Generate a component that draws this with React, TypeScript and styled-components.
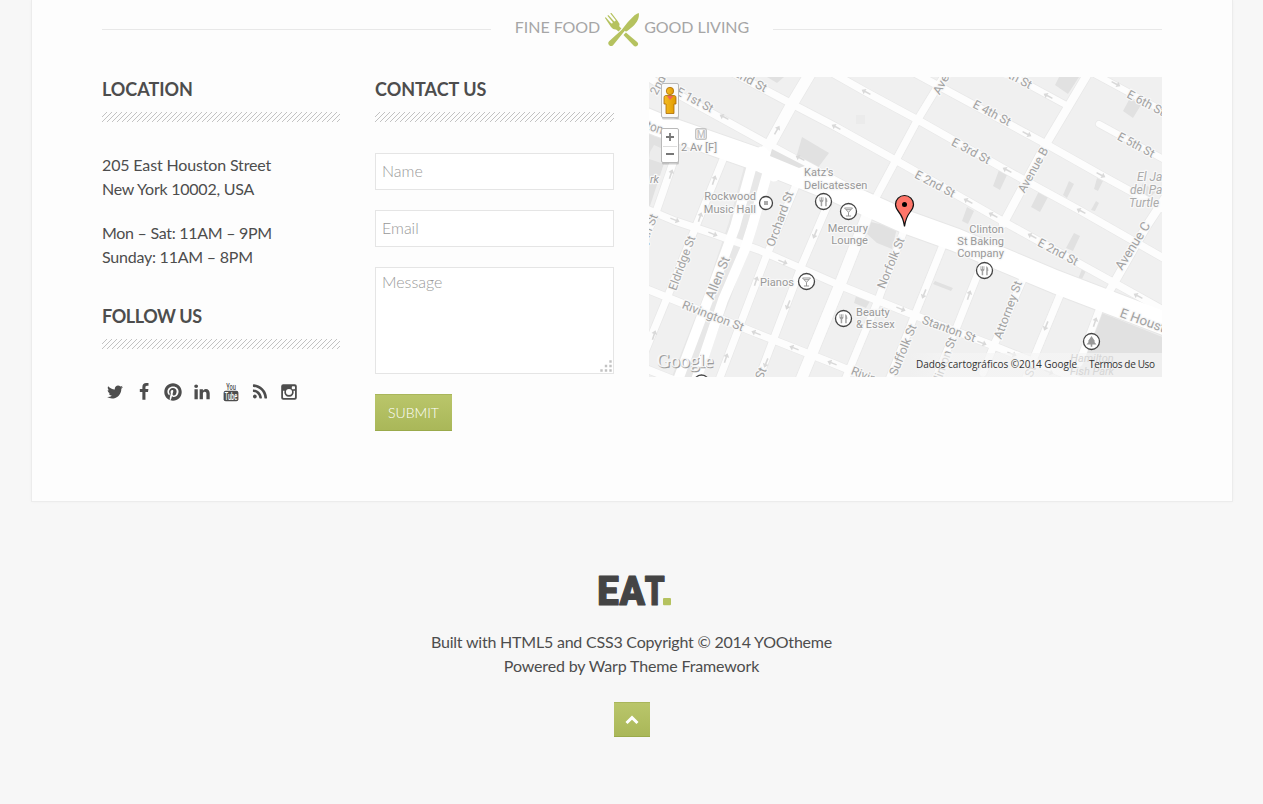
import React from "react";
import styled, { createGlobalStyle } from "styled-components";
import { FaPinterest } from "react-icons/fa";

const GlobalStyle = createGlobalStyle`
  *, *::before, *::after { box-sizing: border-box; }
  body {
    margin: 0;
    background: #f7f7f7;
    color: #4d4d4d;
    font: 400 16px/24px Lato, "Liberation Sans", sans-serif;
  }
`;

const hatch = `url("data:image/svg+xml,${encodeURIComponent(
  '<svg xmlns="http://www.w3.org/2000/svg" width="5" height="5" fill="#c2c2c2" shape-rendering="crispEdges"><rect x="0" y="4" width="1" height="1"/><rect x="1" y="3" width="1" height="1"/><rect x="2" y="2" width="1" height="1"/><rect x="3" y="1" width="1" height="1"/><rect x="4" y="0" width="1" height="1"/></svg>'
)}")`;

const Page = styled.div`
  height: 804px;
  overflow: hidden;
`;
const Card = styled.main`
  width: 1202px;
  height: 502px;
  margin: 0 auto 0 31px;
  padding: 0 70px;
  background: #fdfdfd;
  border: 1px solid #ececec;
  border-top: 0;
  box-shadow: 0 0 3px rgba(0, 0, 0, 0.03);
`;
const Tagline = styled.div`
  height: 77px;
  padding-top: 11px;
  display: flex;
  align-items: flex-start;
  color: #a6a6a6;
`;
const Rule = styled.span`
  flex: 1;
  height: 1px;
  margin-top: 18px;
  background: #e8e8e8;
`;
const TaglineText = styled.div`
  width: 282px;
  display: flex;
  justify-content: center;
  gap: 4px;
  line-height: 32px;
  letter-spacing: -0.05px;
  white-space: nowrap;
  svg { margin-top: 1px; }
`;
const Columns = styled.div`
  display: grid;
  grid-template-columns: 238px 239px 513px;
  gap: 35px;
`;
const Column = styled.section`
  display: flex;
  flex-direction: column;
`;
const Heading = styled.h3<{ $tracking?: number }>`
  margin: 0 0 31px;
  font-size: 18px;
  line-height: 24px;
  font-weight: 700;
  letter-spacing: ${(p) => p.$tracking ?? 0}px;
  &::after {
    content: "";
    display: block;
    height: 10px;
    margin-top: 11px;
    background: ${hatch} 0 0 / 5px 5px;
  }
`;
const Paragraph = styled.p<{ $gap: number }>`
  margin: 0 0 ${(p) => p.$gap}px;
`;
const Line = styled.span<{ $tracking: number }>`
  display: block;
  white-space: nowrap;
  letter-spacing: ${(p) => p.$tracking}px;
`;
const Socials = styled.nav`
  display: flex;
  gap: 11.100px;
  padding: 3px 0 0 3.500px;
  svg { display: block; width: 18px; height: 18px; fill: currentColor; overflow: visible; }
`;
const Form = styled.form`
  display: flex;
  flex-direction: column;
  align-items: stretch;
  gap: 20px;
`;
const fieldFont = `
  font: 300 16px/24px Lato, sans-serif;
  color: #4d4d4d;
  background: #fff;
  border: 1px solid #e5e5e5;
  border-radius: 0;
  width: 100%;
  outline: 0;
  &::placeholder { color: #999; opacity: 1; }
`;
const Field = styled.input`
  ${fieldFont}
  height: 37px;
  padding: 0 6px 2px;
`;
const MessageBox = styled.div`
  position: relative;
  height: 107px;
`;
const Message = styled.textarea`
  ${fieldFont}
  display: block;
  height: 107px;
  padding: 2px 6px;
  resize: none;
`;
const Grip = styled.svg`
  position: absolute;
  right: 1px;
  bottom: 2px;
`;
const greenFace = `
  background: linear-gradient(#bac66b, #a9b758);
  border: 0;
  box-shadow: inset 0 1px #a9b65b, inset 0 -1px #9aaa4b;
  color: #fff;
`;
const Submit = styled.button`
  ${greenFace}
  align-self: flex-start;
  width: 77px;
  height: 37px;
  padding: 0;
  font: 300 14px/37px Lato, sans-serif;
`;
const MapSvg = styled.svg`
  display: block;
  width: 513px;
  height: 300px;
  overflow: hidden;
  font-family: Roboto, sans-serif;
`;
const Footer = styled.footer`
  padding-top: 72px;
  display: flex;
  flex-direction: column;
  align-items: center;
  text-align: center;
`;
const Logo = styled.svg`
  overflow: visible;
`;
const Credits = styled.p`
  margin: 23px 0 24px;
`;
const ToTop = styled.button`
  ${greenFace}
  width: 36px;
  height: 35px;
  padding: 0;
  display: grid;
  place-items: center;
`;

const glyphs = {
  twitter:
    "M1684 408q-67 98-162 167 1 14 1 42 0 130-38 259.5t-115.5 248.5-184.5 210.5-258 146-323 54.5q-271 0-496-145 35 4 78 4 225 0 401-138-105-2-188-64.5t-114-159.5q33 5 61 5 43 0 85-11-112-23-185.5-111.5t-73.5-205.5v-4q68 38 146 41-66-44-105-115t-39-154q0-88 44-163 121 149 294.5 238.5t371.5 99.5q-8-38-8-74 0-134 94.5-228.5t228.5-94.5q140 0 236 102 109-21 205-78-37 115-142 178 93-10 186-50z",
  facebook:
    "M1343 12v264h-157q-86 0-116 36t-30 108v189h293l-39 296h-254v759h-306v-759h-255v-296h255v-218q0-186 104-288.5t277-102.5q147 0 228 12z",
  linkedin:
    "M477 625v991h-330v-991h330zm21-306q1 73-50.5 122t-135.5 49h-2q-82 0-132-49t-50-122q0-74 51.5-122.5t134.5-48.5 133 48.5 51 122.5zm1166 729v568h-329v-530q0-105-40.5-164.5t-126.5-59.5q-63 0-105.5 34.5t-63.5 85.5q-11 30-11 81v553h-329q2-399 2-647t-1-296l-1-48h329v144h-2q20-32 41-56t56.5-52 87-43.5 114.5-15.5q171 0 275 113.5t104 332.5z",
  rss: "M576 1344q0 80-56 136t-136 56-136-56-56-136 56-136 136-56 136 56 56 136zm512 123q2 28-17 48-18 21-47 21h-135q-25 0-43-16.5t-20-41.5q-22-229-184.5-391.5t-391.5-184.5q-25-2-41.5-20t-16.5-43v-135q0-29 21-47 17-17 43-17h5q160 13 306 80.5t259 181.5q114 113 181.5 259t80.5 306zm512 2q2 27-18 47-18 20-46 20h-143q-26 0-44.5-17.5t-19.5-42.5q-12-215-101-408.5t-231.5-336-336-231.5-408.5-102q-25-1-42.5-19.5t-17.5-43.5v-143q0-28 20-46 18-18 44-18h3q262 13 501.5 120t425.5 294q187 186 294 425.5t120 501.5z",
};
const Glyph = ({ d }: { d: string }) => (
  <svg viewBox="0 0 1792 1792"><path d={d} /></svg>
);
const YouTube = () => (
  <svg viewBox="0 0 18 18">
    <text x="4.200" y="6.500" fontSize="9.500" fontWeight="500" fontFamily="Roboto" textLength="9.600" lengthAdjust="spacingAndGlyphs">You</text>
    <rect x="1.600" y="7.700" width="14.800" height="10.600" rx="2" />
    <text x="2.800" y="16.700" fontSize="10" fontWeight="500" fontFamily="Roboto" fill="#fdfdfd" textLength="12.400" lengthAdjust="spacingAndGlyphs">Tube</text>
  </svg>
);
const Instagram = () => (
  <svg viewBox="0 0 18 18">
    <path fillRule="evenodd" d="M3.200 1.300h11.600a2 2 0 0 1 2 2v11.500a2 2 0 0 1-2 2H3.200a2 2 0 0 1-2-2V3.300a2 2 0 0 1 2-2zM3 7.800v6.500q0 .7.700.7h10.600q.7 0 .7-.7V7.800h-1.500a4.700 4.700 0 1 1-9 0zM12.500 3.200a.7.7 0 0 0-.7.7v1.700q0 .7.7.7h1.800q.7 0 .7-.7V3.900a.7.7 0 0 0-.7-.7zM9 6a3.050 3.050 0 1 0 0 6.100A3.050 3.050 0 0 0 9 6z" />
  </svg>
);
const Cutlery = () => (
  <svg width="36" height="36" viewBox="0.700 0 36 36" fill="#b5c25f">
    <path d="M35.500 1c.8 4.500-1.600 9.500-6 13.500l-5.200 4.300q-1.700 1.200-2.800 0L9.800 33.200q-2 1.800-3.900 0t-.1-3.900L18.500 17.700Q24 10 31.200 3.300 34 1.400 35.500 1z" />
    <path d="M22.600 20.600 33.800 30q2 1.900.2 3.700-1.900 1.700-3.800-.2l-10-10.600z" />
    <path d="m1.700 5.900 6 9q2.200 2.800 5 2.500l2.600 2.200 2.800-3-2.200-2.300q1-2.600-1.500-5.200L8.200 1.100q-.9-.4-1.200.5L12.200 8q.4 1-.4 1.300-.7.400-1.300-.2L5.300 3.200q-1-.3-1.200.6L9.300 10q.4 1-.4 1.400-.8.300-1.400-.3L2.700 5.400q-.8-.3-1 .5z" />
  </svg>
);

type Street = [string, number];
const streets: Street[] = [
  ["M-6 -3 10 7 117 66 228 126", 8],
  ["M65 -14 143 27 187 50 257 89 357 146 462 204 516 234", 8],
  ["M155 -20 217 15 269 43 357 93 432 134 516 182", 8],
  ["M262 -6 397 67 452 98 516 133", 8],
  ["M345 -11 417 28", 7],
  ["M450 47 516 83", 7],
  ["M440 -6 516 35", 7],
  ["M165 -10 143 27 115 78", 12],
  ["M300 -9 269 42 225 124", 8],
  ["M441 -7 397 67 354 147", 9],
  ["M520 115 497 150 457 220", 9],
  ["M26 80 6 138 -6 166", 8],
  ["M75 80 45 154 18 221 -12 294", 8],
  ["M147 108 117 180 70 303", 8],
  ["M179 127 152 190 109 303", 8],
  ["M220 134 190 210 152 303", 12],
  ["M258 145 228 226 196 303", 8],
  ["M294 168 267 235 240 303", 8],
  ["M334 184 305 257 286 303", 8],
  ["M374 202 345 268 334 296", 8],
  ["M411 218 382 288 376 303", 8],
  ["M451 231 430 286", 8],
  ["M-5 131 26 144 65 157 110 173 190 208 257 235 340 267 430 303", 8],
  ["M-5 211 107 256 145 271 183 286 229 305", 8],
  ["M-5 291 25 303", 8],
];
const blocks = [
  "M0 55 22 65 0 132z",
  "M153 60 180 76 168 92 147 81z",
  "M118 0h17l-7 6z",
  "M410 0h20l-11 17-13-9z",
  "M481 21 492 28 484 41 474 34z",
  "M350 93 358 98 351 113 344 109z",
  "M390 114 399 120 391 135 382 130z",
  "M420 104 425 107 418 121 414 118z",
  "M448 101 454 104 449 114 445 112z",
  "M447 124 450 126 446 134 442 133z",
  "M318 130 325 134 319 147 313 144z",
  "M425 156 431 159 424 174 417 171z",
  "M433 192 437 194 432 204 429 202z",
  "M222 145 248 151 243 172 228 166 218 157z",
  "M207 219 221 224 217 231 205 226z",
  "M286 204 304 211 302 214 284 207z",
  "M453 236 516 261V303H426z",
  "M494 106l13 9-9 7-7-9z",
];
type Arrow = [number, number, number];
const arrows: Arrow[] = [
  [75, 40, 208], [128, 53, -60], [187, 50, 208], [217, 15, 208], [151, 81, 208],
  [22, 97, -72], [65, 103, -72], [51, 140, -72], [26, 143, 22], [64, 157, 22],
  [134, 185, 22], [166, 157, 112], [107, 204, -72], [139, 228, 112], [117, 286, 112],
  [107, 256, 202], [145, 271, 202], [183, 286, 202], [77, 281, -72], [5, 258, -72],
  [252, 232, 22], [399, 19, 208], [467, 7, 28], [378, 57, 28], [358, 93, 208], [452, 98, 28],
  [319, 124, 208], [344, 138, 208], [432, 134, 208], [383, 159, 208],
  [275, 217, 112], [320, 218, -72], [397, 249, 112], [446, 245, -72], [333, 266, 22],
  [363, 277, 22], [489, 219, 208], [400, 295, 22],
];
// text, centre x, centre y, rotation, rendered length, font size
type Label = [string, number, number, number, number, number?];
const labels: Label[] = [
  ["2nd", 9, 8, -62, 20], ["E 1st St", 46, 23, 28, 40], ["E 2nd St", 97, 1, 28, 46],
  ["ouston", -3, 48, 18, 35, 13],
  ["Avenue A", 300, -7, -61, 54], ["E 4th St", 343, 36, 28, 41], ["E 5th St", 364, -1, 28, 41],
  ["E 3rd St", 322, 74, 28, 42], ["E 2nd St", 286, 107, 28, 44], ["Avenue B", 384, 93, -61, 50],
  ["E 6th St", 497, 26, 28, 41], ["E 5th St", 487, 68, 28, 40],
  ["E 2nd St", 409, 175, 28, 44], ["Avenue C", 484, 169, -58, 54, 13],
  ["Forsyth St", -5, 163, -68, 55], ["Eldridge St", 33, 186, -70, 57], ["Allen St", 69, 201, -68, 45, 13],
  ["Orchard St", 131, 142, -70, 58], ["Norfolk St", 242, 186, -68, 54], ["Suffolk St", 254, 273, -68, 54],
  ["Rivington St", 64, 239, 21, 65], ["Rivington St", 233, 305, 21, 65],
  ["Stanton St", 300, 252, 20, 56], ["Attorney St", 359, 233, -70, 61],
  ["Clinton St", 295, 285, -70, 52], ["Ludlow St", 104, 316, -68, 54],
  ["E Houston St", 508, 249, 20, 78, 13], ["Ridge St", 375, 310, -68, 45],
];
// anchor, x, first baseline, lines, line step
type Poi = ["start" | "middle" | "end", number, number, string[], number, boolean?];
const pois: Poi[] = [
  ["start", 32, 74, ["2 Av [F]"], 13],
  ["start", 155, 99, ["Katz's", "Delicatessen"], 13],
  ["end", 107, 123, ["Rockwood", "Music Hall"], 13],
  ["end", 219, 155, ["Mercury", "Lounge"], 12],
  ["end", 145, 209, ["Pianos"], 12],
  ["start", 207, 239, ["Beauty", "& Essex"], 12],
  ["end", 355, 156, ["Clinton", "St Baking", "Company"], 12],
  ["end", 10, 106, ["rk"], 12, true],
];
const Pin = ({ x, y, kind, r = 8 }: { x: number; y: number; kind: string; r?: number }) => (
  <g transform={`translate(${x} ${y})`}>
    <circle r={r} fill="#fff" stroke="#444" strokeWidth="1.300" />
    {kind === "fork" && (
      <g fill="#a3a3a3">
        <path d="M-4-4.300h.9v2.800h.6v-2.800h.9v2.800h.6v-2.800h.9v3.600q0 1-1.200 1.400v4h-1.500v-4Q-4 .3-4-.7z" />
        <path d="M1.700-4.300q2.300.6 2.100 4.800H3.200v4.200H1.700z" />
      </g>
    )}
    {kind === "glass" && <path d="M-4-3.500H4L0 .8zM0 .8V4.500M-2.600 4.500h5.200M-2.500-1.800h5" fill="none" stroke="#999" />}
    {kind === "tree" && <path d="M0-5.500-3.700 0h1.200L-5 3h4.200v2.200H.8V3H5L2.500 0h1.200z" fill="#999" />}
    {kind === "stage" && <rect x="-2" y="-2" width="4" height="4" fill="#aaa" />}
  </g>
);
const houston = "M-14 38 10 48 113 84 188 114 257 145 307 163 407 205 522 249";

const CityMap = () => (
  <MapSvg viewBox="0 0 513 300">
    <defs>
      <linearGradient id="figure" x1="0" x2="1"><stop stopColor="#f5bd24" /><stop offset="1" stopColor="#e09a00" /></linearGradient>
      <linearGradient id="legal" x1="0" x2="1"><stop stopColor="#f5f5f5" stopOpacity="0" /><stop offset=".15" stopColor="#f5f5f5" stopOpacity=".7" /></linearGradient>
    </defs>
    <rect width="513" height="300" fill="#f0f0f0" />
    {blocks.map((d) => <path key={d} d={d} fill="#e1e1e1" />)}
    <path d="M207 38h9v9h-9z" fill="#ebebeb" />
    <path d="M1 75 5 68l18 8-5 12-18-6z" fill="#ececec" />
    <g fill="none" strokeLinejoin="round" strokeLinecap="round">
      {streets.map(([d, w]) => <path key={d} d={d} stroke="#e8e8e8" strokeWidth={w + 0.8} />)}
      <path d={houston} stroke="#e7e7e7" strokeWidth="25" />
      <path d="M108 92 92 150 70 215 36 302" stroke="#e7e7e7" strokeWidth="26" />
      {streets.map(([d, w]) => <path key={d} d={d} stroke="#fdfdfd" strokeWidth={w - 0.7} />)}
      <path d="M102 92 86 150 62 215 29 303" stroke="#fff" strokeWidth="10" />
      <path d="M119 94 103 150 96 172 74 223 47 303" stroke="#fff" strokeWidth="10" />
      <path d={houston} stroke="#fff" strokeWidth="23" />
      <path d="M113 76 125 98" stroke="#fff" strokeWidth="13" />
    </g>
    <path d="M123 72 156 89 150 91 121 79z" fill="#e1e1e1" />
    {arrows.map(([x, y, a]) => (
      <path key={`${x}-${y}`} transform={`translate(${x} ${y}) rotate(${a})`} d="M-5-.8H1V-3L5 0 1 3V.8H-5z" fill="#d9d9d9" />
    ))}
    <g fontSize="12" fill="#a2a2a2" stroke="#f8f8f8" strokeWidth="2.500" paintOrder="stroke" strokeLinejoin="round" textAnchor="middle">
      {labels.map(([t, x, y, a, len, size]) => (
        <text key={`${t}${x}`} transform={`translate(${x} ${y}) rotate(${a})`} y="4" fontSize={size ?? 12} textLength={len} lengthAdjust="spacingAndGlyphs">{t}</text>
      ))}
    </g>
    <g fontSize="11" letterSpacing=".05" fill="#999" stroke="#f8f8f8" strokeWidth="2.500" paintOrder="stroke" strokeLinejoin="round">
      {pois.map(([anchor, x, y, lines, step, italic]) => (
        <text key={lines[0]} textAnchor={anchor} fontStyle={italic ? "italic" : "normal"}>
          {lines.map((l, i) => <tspan key={l} x={x} y={y + i * step}>{l}</tspan>)}
        </text>
      ))}
      <g fontStyle="italic" fontSize="12" fill="#ababab">
        <text x="488" y="104">El Jardin</text>
        <text x="481" y="117">del Paraiso</text>
        <text x="480" y="130">Turtle</text>
      </g>
    </g>
    <rect x="46.700" y="51.700" width="10.600" height="10.600" rx="1.500" fill="#fff" stroke="#c4c4c4" strokeWidth="1.400" />
    <text x="52" y="60.700" fontSize="10" fontWeight="500" fill="#c0c0c0" textAnchor="middle">M</text>
    <Pin x={174.500} y={124.500} kind="fork" />
    <Pin x={199.500} y={134.500} kind="glass" />
    <Pin x={117} y={126} kind="stage" r={6.500} />
    <Pin x={157.500} y={204.500} kind="glass" />
    <Pin x={194.500} y={241.500} kind="fork" />
    <Pin x={335.500} y={193.500} kind="fork" />
    <Pin x={442.500} y={264.500} kind="tree" />
    <Pin x={52.500} y={306} kind="none" />
    <path d="M255.500 149.500q-1.200-9-5.700-14.500-3.300-4.200-3.300-7.500a9 9 0 0 1 18 0q0 3.300-3.300 7.500-4.500 5.500-5.700 14.500z" fill="#fe7569" stroke="#111" strokeWidth="1.200" />
    <circle cx="255.500" cy="127.500" r="2.500" />
    <rect x="260" y="276" width="253" height="24" fill="url(#legal)" />
    <g fontStyle="italic" fontSize="11" fill="#d6d6d6" textAnchor="middle">
      <text x="443" y="285">Hamilton</text>
      <text x="443" y="298">Fish Park</text>
    </g>
    <g fontFamily="Open Sans" fontSize="10" fill="#333">
      <text x="267" y="291" textLength="161">Dados cartográficos ©2014 Google</text>
      <text x="440" y="291" textLength="66">Termos de Uso</text>
    </g>
    <g fontFamily="Liberation Serif" fontSize="19.500">
      <text x="8.200" y="291.200" fill="#999" stroke="#999" strokeWidth=".6" textLength="57" lengthAdjust="spacingAndGlyphs">Google</text>
      <text x="7.300" y="290.300" fill="#f7f7f7" stroke="#f7f7f7" strokeWidth=".3" textLength="57" lengthAdjust="spacingAndGlyphs">Google</text>
    </g>
    <g stroke="#b9b9b9">
      <rect x="12.500" y="6.500" width="17" height="35" rx="1.500" fill="#000" opacity=".18" stroke="none" transform="translate(.5 1)" />
      <rect x="12.500" y="6.500" width="17" height="34" rx="1.500" fill="#fafafa" />
      <rect x="12.500" y="51.500" width="17" height="35" rx="1.500" fill="#000" opacity=".18" stroke="none" transform="translate(.5 1)" />
      <rect x="12.500" y="51.500" width="17" height="34" rx="1.500" fill="#fff" />
      <path d="M14 69.500h14" stroke="#ddd" />
      <path d="M17 60h8M21 56v8M17 77h8" stroke="#777" strokeWidth="1.800" />
    </g>
    <g fill="url(#figure)" stroke="#aa6b0a" strokeWidth=".8">
      <path d="M16.500 18.500h9q1.500.3 1.500 2V27h-2v9.500h-8V27h-2v-6.500q0-1.700 1.500-2z" />
      <path d="M18 19h6.500L21 23z" fill="#f0625a" stroke="none" />
      <circle cx="21" cy="14" r="3.700" />
    </g>
  </MapSvg>
);

export default function App() {
  return (
    <Page>
      <GlobalStyle />
      <Card>
        <Tagline>
          <Rule />
          <TaglineText><span>FINE FOOD</span><Cutlery /><span>GOOD LIVING</span></TaglineText>
          <Rule />
        </Tagline>
        <Columns>
          <Column>
            <Heading $tracking={-0.05}>LOCATION</Heading>
            <Paragraph $gap={20}>
              <Line $tracking={-0.15}>205 East Houston Street</Line>
              <Line $tracking={-0.24}>New York 10002, USA</Line>
            </Paragraph>
            <Paragraph $gap={35}>
              <Line $tracking={-0.28}>Mon – Sat: 11AM – 9PM</Line>
              <Line $tracking={-0.23}>Sunday: 11AM – 8PM</Line>
            </Paragraph>
            <Heading $tracking={-0.42}>FOLLOW US</Heading>
            <Socials>
              <Glyph d={glyphs.twitter} />
              <Glyph d={glyphs.facebook} />
              <FaPinterest />
              <Glyph d={glyphs.linkedin} />
              <YouTube />
              <Glyph d={glyphs.rss} />
              <Instagram />
            </Socials>
          </Column>
          <Column>
            <Heading>CONTACT US</Heading>
            <Form>
              <Field placeholder="Name" />
              <Field placeholder="Email" />
              <MessageBox>
                <Message placeholder="Message" />
                <Grip width="13" height="12" fill="#c2c2c2">
                  <path d="M9.300.3h2.400v2.400H9.300zM4.800 4.800h2.400v2.400H4.800zM9.300 4.800h2.400v2.400H9.300zM.3 9.300h2.400v2.400H.3zM4.800 9.300h2.400v2.400H4.800zM9.300 9.300h2.400v2.400H9.300z" />
                </Grip>
              </MessageBox>
              <Submit type="button">SUBMIT</Submit>
            </Form>
          </Column>
          <CityMap />
        </Columns>
      </Card>
      <Footer>
        <Logo width="75" height="33" viewBox="0 0 75 33" fontFamily="Roboto" fontWeight="900" fontSize="41" fill="#444" stroke="#444" strokeWidth="1.200" strokeLinejoin="round">
          <text y="30.500">
            <tspan x="3.300" textLength="21.500" lengthAdjust="spacingAndGlyphs">E</tspan>
            <tspan x="25.500" textLength="25.500" lengthAdjust="spacingAndGlyphs">A</tspan>
            <tspan x="50.800" textLength="20" lengthAdjust="spacingAndGlyphs">T</tspan>
          </text>
          <rect x="69" y="24" width="8" height="7.300" rx="1" fill="#b5c25f" stroke="none" />
        </Logo>
        <Credits>
          <Line $tracking={-0.21}>Built with HTML5 and CSS3 Copyright © 2014 YOOtheme</Line>
          <Line $tracking={-0.15}>Powered by Warp Theme Framework</Line>
        </Credits>
        <ToTop aria-label="Back to top">
          <svg width="14" height="10" viewBox="0 0 14 10" fill="none" stroke="#fff" strokeWidth="3"><path d="m1.500 8 5.500-5.300L12.500 8" /></svg>
        </ToTop>
      </Footer>
    </Page>
  );
}
